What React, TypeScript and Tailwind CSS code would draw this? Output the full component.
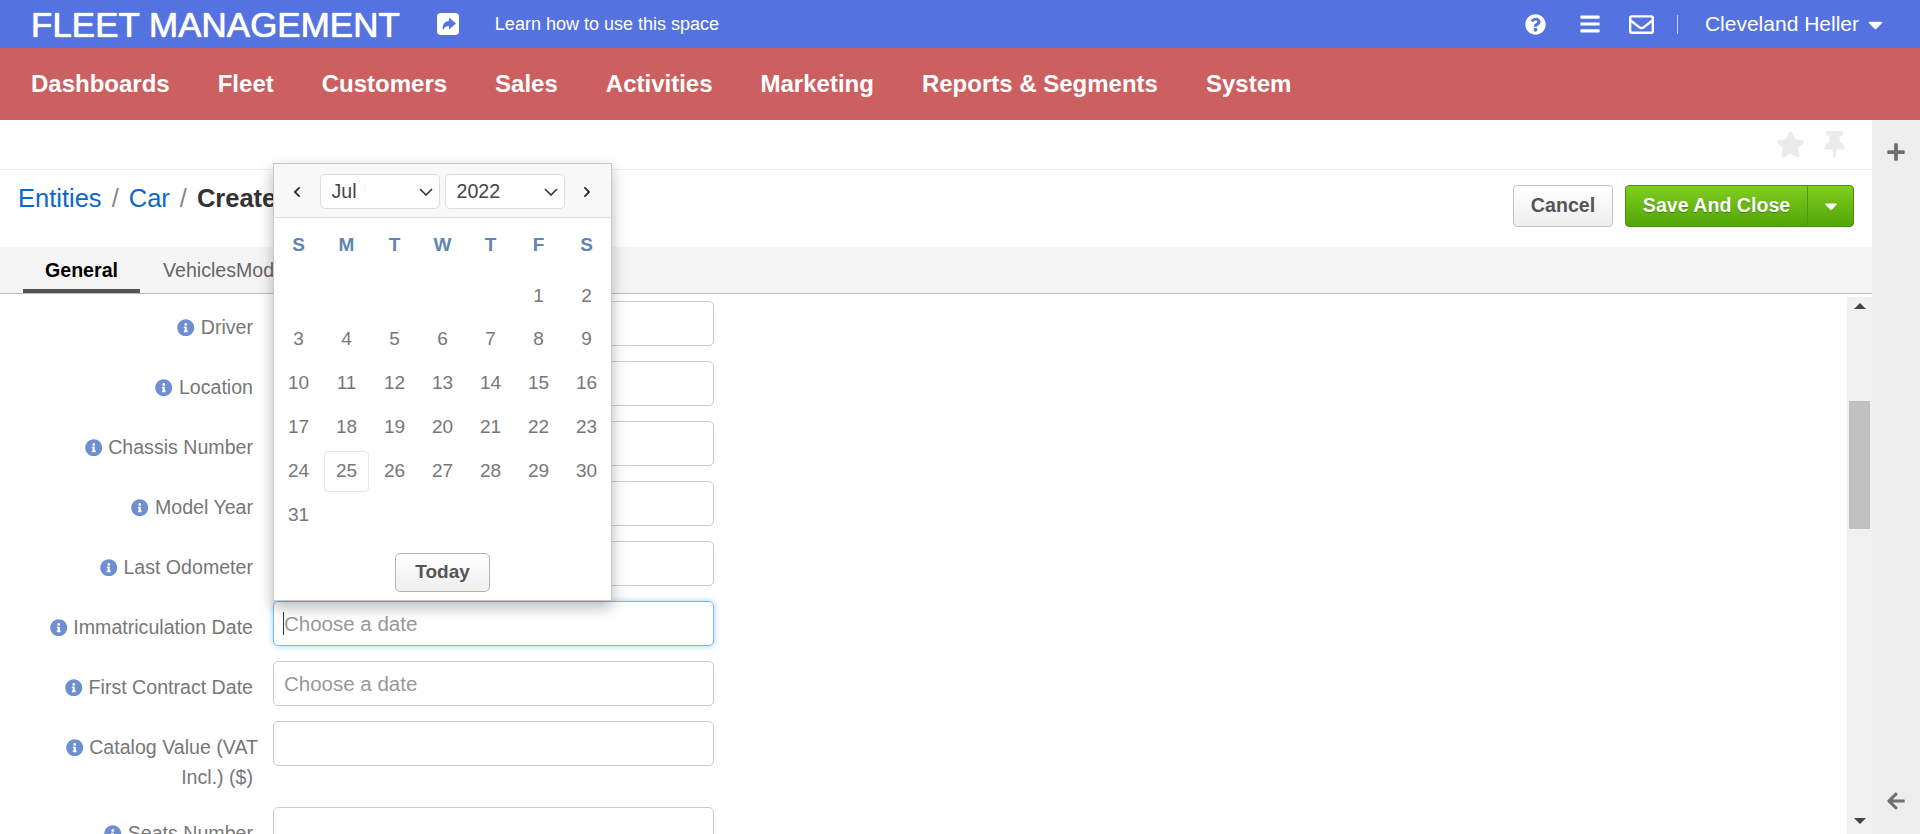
import React from 'react';
import {
  FaArrowLeft,
  FaBars,
  FaCaretDown,
  FaChevronLeft,
  FaChevronRight,
  FaInfoCircle,
  FaPlus,
  FaQuestionCircle,
  FaRegEnvelope,
  FaStar,
  FaThumbtack,
} from 'react-icons/fa';

const NAV_ITEMS = ['Dashboards', 'Fleet', 'Customers', 'Sales', 'Activities', 'Marketing', 'Reports & Segments', 'System'];
const WEEK_DAYS = ['S', 'M', 'T', 'W', 'T', 'F', 'S'];
const MONTH_CELLS = [0, 0, 0, 0, 0, ...Array.from({ length: 31 }, (_, i) => i + 1)];

function ShareIcon() {
  return (
    <svg viewBox="0 0 24 24" className="ml-[36px] h-[24px] w-[24px]">
      <rect x="1" y="1" width="22" height="22" rx="4" fill="#fff" />
      <path d="M13 5.5 L20 11.5 L13 17.5 V14 C10 14 8 15.2 7 18.5 C5.8 13 8.8 9 13 9 Z" fill="#5473e0" />
    </svg>
  );
}

function Field({ label, placeholder, focused }: { label: string; placeholder?: string; focused?: boolean }) {
  return (
    <div className="flex gap-[20px]">
      <label className="w-[253px] pt-[11px] text-right text-[19.6px] leading-[30px] text-[#777]">
        <FaInfoCircle className="mr-[6px] inline-block align-[-2px] text-[17.5px] text-[#6d8fd1]" />
        {label}
      </label>
      <div className="relative">
        <input
          readOnly
          placeholder={placeholder}
          className={`block h-[45px] w-[441px] rounded-[5px] border bg-white px-[10px] text-[20.5px] outline-none placeholder:text-[#999] ${
            focused ? 'border-[#7cb8ee] shadow-[0_0_6px_rgba(102,175,233,0.6)]' : 'border-[#ccc]'
          }`}
        />
        {focused && <span className="absolute top-[11px] left-[10px] h-[23px] w-px bg-[#333]" />}
      </div>
    </div>
  );
}

function MonthSelect({ value }: { value: string }) {
  return (
    <div className="relative">
      <select
        defaultValue={value}
        className="block h-[35px] w-[120px] appearance-none rounded-[5px] border border-[#ddd] bg-white pl-[11px] text-[19.6px] text-[#444] outline-none"
      >
        <option>{value}</option>
      </select>
      <svg viewBox="0 0 14 8" className="pointer-events-none absolute top-[14px] right-[7px] h-[8px] w-[14px]">
        <path d="M1 1 L7 7 L13 1" fill="none" stroke="#333" strokeWidth="1.6" />
      </svg>
    </div>
  );
}

function DatePicker() {
  return (
    <div className="absolute top-[163px] left-[273px] z-10 h-[438px] w-[339px] border border-[#c8c8c8] bg-white shadow-[0_6px_14px_rgba(0,0,0,0.28)]">
      <div className="flex h-[54px] items-center justify-between border-b border-[#ddd] bg-[#f8f8f8] pt-[2px] pr-[18px] pl-[17px]">
        <FaChevronLeft className="text-[12px] text-[#333]" />
        <div className="flex gap-[5px]">
          <MonthSelect value="Jul" />
          <MonthSelect value="2022" />
        </div>
        <FaChevronRight className="text-[12px] text-[#333]" />
      </div>
      <div className="grid grid-cols-[repeat(7,48px)] justify-center">
        {WEEK_DAYS.map((d, i) => (
          <div key={i} className="flex h-[56px] items-center justify-center pb-[1px] text-[19px] font-bold text-[#5f85b0]">
            {d}
          </div>
        ))}
        {MONTH_CELLS.map((d, i) => (
          <div key={i} className="flex h-[43.8px] items-center justify-center text-[19px] text-[#777]">
            {d === 25 ? (
              <span className="flex h-[41px] w-[45px] items-center justify-center rounded-[4px] border border-[#e6e6e6]">{d}</span>
            ) : (
              d > 0 && d
            )}
          </div>
        ))}
      </div>
      <div className="mt-[16px] flex justify-center">
        <button className="h-[39px] w-[95px] rounded-[5px] border border-[#b3b3b3] bg-gradient-to-b from-white to-[#eee] text-[19px] font-bold text-[#555]">
          Today
        </button>
      </div>
    </div>
  );
}

export default function App() {
  return (
    <div className="relative flex h-[834px] w-[1920px] flex-col overflow-hidden bg-white font-['Liberation_Sans',Arial,sans-serif]">
      <header className="flex h-[48px] shrink-0 items-center bg-[#5473e0] pr-[33px] pl-[31px] text-white">
        <span className="text-[35px] leading-none [text-shadow:0_0_1px_#fff,0_0_1px_#fff]">FLEET MANAGEMENT</span>
        <ShareIcon />
        <span className="ml-[35px] text-[18px]">Learn how to use this space</span>
        <div className="ml-auto flex items-center">
          <FaQuestionCircle className="text-[21px]" />
          <FaBars className="ml-[33px] text-[22px]" />
          <FaRegEnvelope className="ml-[28px] text-[25px]" />
          <span className="mr-[27px] ml-[23px] h-[19px] w-px bg-white/70" />
          <span className="text-[21px]">Cleveland Heller</span>
          <FaCaretDown className="ml-[5px] text-[23px]" />
        </div>
      </header>

      <nav className="flex h-[72px] shrink-0 items-center gap-[48px] bg-[#cc6060] px-[31px] text-[24px] font-bold text-white">
        {NAV_ITEMS.map((item) => (
          <span key={item}>{item}</span>
        ))}
      </nav>

      <div className="flex min-h-0 flex-1">
        <main className="flex w-[1872px] flex-col">
          <div className="flex h-[50px] shrink-0 items-center justify-end gap-[16px] border-b border-[#f0f0f0] pr-[24px] text-[#ebebeb]">
            <FaStar className="text-[29px]" />
            <FaThumbtack className="text-[27px]" />
          </div>

          <div className="flex h-[77px] shrink-0 items-start justify-between pt-[15px] pr-[18px] pl-[18px]">
            <div className="-mt-[4px] text-[25.5px] leading-[34px] text-[#888]">
              <span className="text-[#0b67c9]">Entities</span>
              <span className="mx-[10px]">/</span>
              <span className="text-[#0b67c9]">Car</span>
              <span className="mx-[10px]">/</span>
              <span className="font-bold text-[#333]">Create Car</span>
            </div>
            <div className="flex gap-[12px]">
              <button className="h-[42px] w-[100px] rounded-[4px] border border-[#c4c4c4] bg-gradient-to-b from-white to-[#eee] text-[19.6px] font-bold text-[#555]">
                Cancel
              </button>
              <div className="flex h-[42px] w-[229px] rounded-[4px] border border-[#45900f] bg-gradient-to-b from-[#80ce20] to-[#52a505] text-white">
                <span className="flex w-[181px] items-center justify-center text-[19.6px] font-bold [text-shadow:0_1px_1px_rgba(0,0,0,0.3)]">
                  Save And Close
                </span>
                <span className="flex flex-1 items-center justify-center border-l border-[#4c9a12]">
                  <FaCaretDown className="text-[20px]" />
                </span>
              </div>
            </div>
          </div>

          <div className="flex h-[47px] shrink-0 items-end gap-[23px] border-b border-[#bbb] bg-[#f5f5f5] pl-[23px] text-[19.6px]">
            <span className="h-[46px] w-[117px] border-b-[4px] border-[#555] pt-[9px] text-center font-bold text-black">General</span>
            <span className="h-[46px] pt-[9px] text-[#666]">VehiclesModel</span>
          </div>

          <div className="flex min-h-0 flex-1 pt-[3px]">
            <div className="flex flex-1 flex-col gap-[15px] overflow-hidden pt-[4px]">
              <Field label="Driver" />
              <Field label="Location" />
              <Field label="Chassis Number" />
              <Field label="Model Year" />
              <Field label="Last Odometer" />
              <Field label="Immatriculation Date" placeholder="Choose a date" focused />
              <Field label="First Contract Date" placeholder="Choose a date" />
              <div className="flex gap-[20px]">
                <label className="w-[253px] pt-[11px] text-right text-[19.6px] leading-[30px] text-[#777]">
                  <span className="-mr-[5px] block whitespace-nowrap">
                    <FaInfoCircle className="mr-[6px] inline-block align-[-2px] text-[17.5px] text-[#6d8fd1]" />
                    Catalog Value (VAT
                  </span>
                  <span className="block">Incl.) ($)</span>
                </label>
                <input readOnly className="block h-[45px] w-[441px] rounded-[5px] border border-[#ccc] outline-none" />
              </div>
              <Field label="Seats Number" />
            </div>
            <div className="flex w-[25px] shrink-0 flex-col items-center justify-between bg-[#f1f1f1] pt-[6px] pb-[10px]">
              <span className="h-0 w-0 border-x-[6px] border-b-[6px] border-x-transparent border-b-[#444]" />
              <span className="mt-[92px] mb-auto h-[128px] w-[21px] bg-[#c1c1c1]" />
              <span className="h-0 w-0 border-x-[6px] border-t-[6px] border-x-transparent border-t-[#444]" />
            </div>
          </div>
        </main>

        <aside className="flex w-[48px] shrink-0 flex-col items-center justify-between bg-[#ededed] pt-[22px] pb-[23px] text-[#6f6f6f]">
          <FaPlus className="text-[20px]" />
          <FaArrowLeft className="text-[20px]" />
        </aside>
      </div>

      <DatePicker />
    </div>
  );
}
